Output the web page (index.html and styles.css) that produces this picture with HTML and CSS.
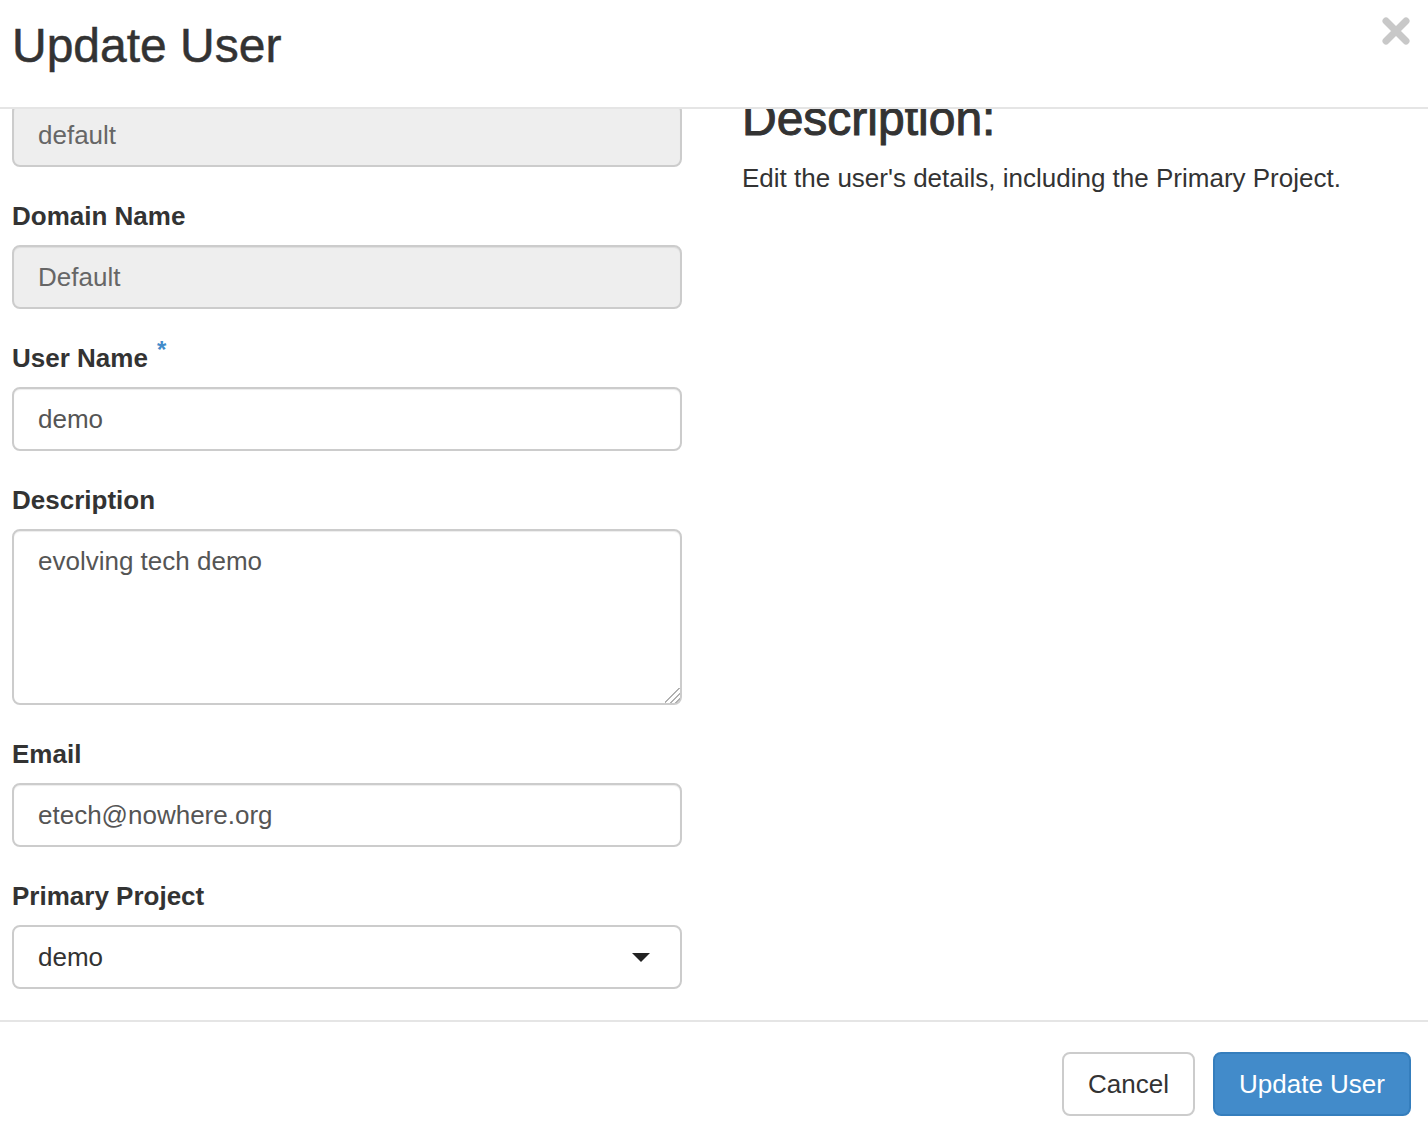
FILE: index.html
```html
<!DOCTYPE html>
<html>
<head>
<meta charset="utf-8">
<link rel="stylesheet" href="styles.css">
</head>
<body>
<div class="modal">
  <div class="modal-header">
    <h4 class="modal-title">Update User</h4>
    <svg class="close" width="28" height="28" viewBox="0 0 28 28"><path d="M4 4 L24 24 M24 4 L4 24" stroke="#c8c8c8" stroke-width="7" stroke-linecap="round"/></svg>
  </div>
  <div class="modal-body">
    <div class="body-inner">
      <div class="left">
        <div class="group first">
          <input class="control" type="text" value="default" disabled>
        </div>
        <div class="group">
          <label class="label">Domain Name</label>
          <input class="control" type="text" value="Default" disabled>
        </div>
        <div class="group">
          <label class="label">User Name <span class="req">*</span></label>
          <input class="control" type="text" value="demo">
        </div>
        <div class="group">
          <label class="label">Description</label>
          <textarea class="control area">evolving tech demo</textarea>
        </div>
        <div class="group">
          <label class="label">Email</label>
          <input class="control" type="text" value="etech@nowhere.org">
        </div>
        <div class="group last">
          <label class="label">Primary Project</label>
          <div class="select">
            <span class="select-value">demo</span>
            <svg class="caret" width="18" height="10" viewBox="0 0 18 10"><path d="M0 0 H18 L9 9 Z" fill="#222"/></svg>
          </div>
        </div>
      </div>
      <div class="right">
        <h3 class="help-title">Description:</h3>
        <p class="help-text">Edit the user's details, including the Primary Project.</p>
      </div>
    </div>
  </div>
  <div class="modal-footer">
    <button class="btn btn-default">Cancel</button>
    <button class="btn btn-primary">Update User</button>
  </div>
</div>
</body>
</html>
```
FILE: styles.css
```css
html, body {
  margin: 0;
  padding: 0;
  background: #fff;
}
body {
  font-family: "Liberation Sans", Arial, Helvetica, sans-serif;
  color: #333;
}
.modal {
  width: 1428px;
  height: 1132px;
  display: flex;
  flex-direction: column;
  overflow: hidden;
}
.modal-header {
  box-sizing: border-box;
  height: 109px;
  flex: none;
  padding: 20px 18px 0 12px;
  border-bottom: 2px solid #e5e5e5;
  display: flex;
  justify-content: space-between;
  align-items: flex-start;
}
.modal-title {
  margin: 0;
  font-size: 48px;
  line-height: 1.1;
  font-weight: normal;
  color: #333;
  -webkit-text-stroke: 0.5px #333;
}
.close {
  margin-top: -3px;
}
.modal-body {
  flex: 1;
  overflow: hidden;
}
.body-inner {
  display: grid;
  grid-template-columns: 670px 1fr;
  column-gap: 60px;
  padding: 0 12px;
  margin-top: -6px;
}
.group {
  margin-top: 30px;
  display: flex;
  flex-direction: column;
}
.group.first {
  margin-top: 0;
}
.label {
  font-size: 26px;
  line-height: 38px;
  font-weight: bold;
  margin-bottom: 10px;
  color: #333;
}
.req {
  color: #428bca;
  font-size: 24px;
  vertical-align: top;
  position: relative;
  top: -8px;
  margin-left: 2px;
}
.control {
  box-sizing: border-box;
  width: 670px;
  height: 64px;
  margin: 0;
  padding: 0 24px;
  border: 2px solid #ccc;
  border-radius: 8px;
  font-family: "Liberation Sans", Arial, Helvetica, sans-serif;
  font-size: 26px;
  color: #555;
  background: #fff;
  box-shadow: inset 0 1px 1px rgba(0,0,0,0.075);
  outline: none;
}
.control:disabled {
  background: #eee;
  color: #666;
  -webkit-text-fill-color: #666;
  opacity: 1;
}
.area {
  height: 176px;
  padding: 12px 24px;
  line-height: 37px;
  resize: vertical;
}
.area::-webkit-scrollbar {
  width: 20px;
  height: 20px;
}
.area::-webkit-resizer {
  background: linear-gradient(135deg,
    transparent 0 46%,
    #b0b0b0 46% 53%,
    transparent 53% 64%,
    #b0b0b0 64% 71%,
    transparent 71% 82%,
    #b0b0b0 82% 89%,
    transparent 89%);
}
.select {
  box-sizing: border-box;
  width: 670px;
  height: 64px;
  border: 2px solid #ccc;
  border-radius: 8px;
  padding: 0 30px 0 24px;
  display: flex;
  align-items: center;
  justify-content: space-between;
  background: #fff;
}
.select-value {
  font-size: 26px;
  color: #333;
}
.caret {
  margin-top: 2px;
}
.right {
  margin-top: -11px;
}
.help-title {
  margin: 0;
  font-size: 48px;
  line-height: 53px;
  font-weight: normal;
  color: #333;
  -webkit-text-stroke: 1px #333;
}
.help-text {
  margin: 14px 0 0;
  font-size: 26px;
  line-height: 38px;
  color: #333;
}
.modal-footer {
  flex: none;
  box-sizing: border-box;
  height: 112px;
  border-top: 2px solid #e5e5e5;
  padding: 30px 17px 0 0;
  display: flex;
  justify-content: flex-end;
  align-items: flex-start;
  gap: 18px;
}
.btn {
  box-sizing: border-box;
  height: 64px;
  padding: 0 24px;
  border-radius: 8px;
  font-family: "Liberation Sans", Arial, Helvetica, sans-serif;
  font-size: 26px;
  line-height: 1;
  cursor: pointer;
}
.btn-default {
  background: #fff;
  border: 2px solid #ccc;
  color: #333;
}
.btn-primary {
  background: #428bca;
  border: 2px solid #357ebd;
  color: #fff;
}
```
